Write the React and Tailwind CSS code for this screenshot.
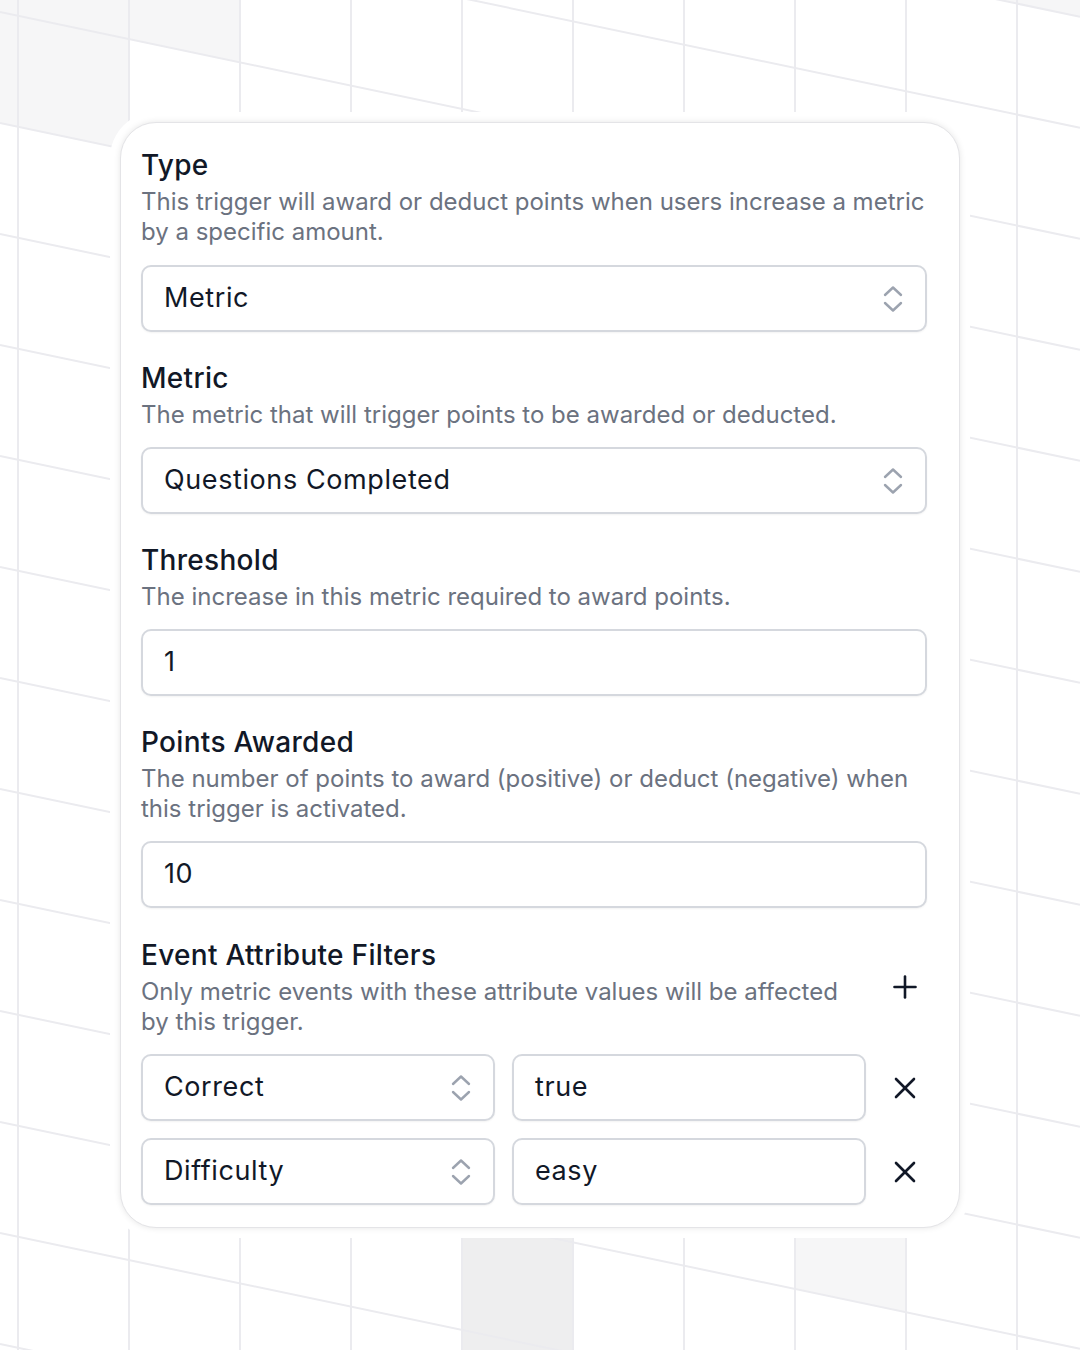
import React from "react";

const FONT = { fontFamily: "Inter, 'Open Sans', sans-serif" };

function Background() {
  const verticals = [18, 129, 240, 351, 462, 573, 684, 795, 906, 1017];
  const lines = [];
  for (let k = -3; k <= 12; k++) {
    const c = 12 + 111 * k;
    lines.push(c);
  }
  return (
    <svg className="absolute inset-0" width="1080" height="1350" viewBox="0 0 1080 1350">
      <polygon points="0,0 129,0 129,150 0,123" fill="#f6f6f7" />
      <polygon points="129,0 240,0 240,62 129,39" fill="#f6f6f7" />
      <polygon points="462,1200 573,1200 573,1350 462,1350" fill="#eeeeef" />
      <polygon points="795,1200 906,1200 906,1312 795,1289" fill="#f6f6f7" />
      <polygon points="1000,0 1080,0 1080,17" fill="#f6f6f7" />
      {verticals.map((x) => (
        <line key={"v" + x} x1={x} y1="0" x2={x} y2="1350" stroke="#ebebef" strokeWidth="2" />
      ))}
      {lines.map((c) => (
        <line key={"h" + c} x1="0" y1={c} x2="1080" y2={c + 0.21 * 1080} stroke="#ebebef" strokeWidth="2" />
      ))}
    </svg>
  );
}

function UpDown() {
  return (
    <svg width="20" height="30" viewBox="0 0 20 30" fill="none" stroke="#9ca3af" strokeWidth="2.4" strokeLinecap="round" strokeLinejoin="round">
      <path d="M2 11 L10 3.5 L18 11" />
      <path d="M2 19 L10 26.5 L18 19" />
    </svg>
  );
}

function XIcon() {
  return (
    <svg width="24" height="24" viewBox="0 0 24 24" fill="none" stroke="#111827" strokeWidth="2.6" strokeLinecap="round">
      <path d="M3 3 L21 21" />
      <path d="M21 3 L3 21" />
    </svg>
  );
}

function PlusIcon() {
  return (
    <svg width="24" height="24" viewBox="0 0 24 24" fill="none" stroke="#111827" strokeWidth="2.6" strokeLinecap="round">
      <path d="M12 1.5 V22.5" />
      <path d="M1.5 12 H22.5" />
    </svg>
  );
}

function Select({ value }) {
  return (
    <div className="flex h-[67px] items-center justify-between rounded-[10px] border-2 border-[#d5d8de] bg-white pl-[21px] pr-[22px] shadow-[0_1px_2px_rgba(0,0,0,0.05)]">
      <span className="text-[27px] text-[#111827] tracking-[0.6px]">{value}</span>
      <UpDown />
    </div>
  );
}

function Input({ value }) {
  return (
    <div className="flex h-[67px] items-center rounded-[10px] border-2 border-[#d5d8de] bg-white pl-[21px] shadow-[0_1px_2px_rgba(0,0,0,0.05)]">
      <span className="text-[27px] text-[#111827] tracking-[0.6px]">{value}</span>
    </div>
  );
}

function Heading({ title, desc }) {
  return (
    <div>
      <div className="text-[28px] font-medium leading-[36px] text-[#111827] tracking-[0.3px]">{title}</div>
      <div className="mt-[4px] text-[24px] leading-[30px] text-[#6b7280] tracking-[0px]">{desc}</div>
    </div>
  );
}

export default function App() {
  return (
    <div className="relative h-[1350px] w-[1080px] overflow-hidden bg-white" style={FONT}>
      <Background />
      <div className="relative pl-[110px] pt-[112px]">
        <div className="w-[860px] rounded-[46px] bg-white p-[10px]">
          <div className="flex flex-col rounded-[36px] border border-[#e4e4e7] bg-white pb-[22px] pl-[20px] pr-[32px] pt-[24px] shadow-[0_0_6px_rgba(0,0,0,0.10)]">
            <Heading
              title="Type"
              desc="This trigger will award or deduct points when users increase a metric by a specific amount."
            />
            <div className="mt-[18px]">
              <Select value="Metric" />
            </div>

            <div className="mt-[28px]">
              <Heading title="Metric" desc="The metric that will trigger points to be awarded or deducted." />
            </div>
            <div className="mt-[17px]">
              <Select value="Questions Completed" />
            </div>

            <div className="mt-[28px]">
              <Heading title="Threshold" desc="The increase in this metric required to award points." />
            </div>
            <div className="mt-[17px]">
              <Input value="1" />
            </div>

            <div className="mt-[28px]">
              <Heading
                title="Points Awarded"
                desc="The number of points to award (positive) or deduct (negative) when this trigger is activated."
              />
            </div>
            <div className="mt-[17px]">
              <Input value="10" />
            </div>

            <div className="mt-[29px] flex items-center gap-[17px]">
              <div className="flex-1">
                <Heading
                  title="Event Attribute Filters"
                  desc="Only metric events with these attribute values will be affected by this trigger."
                />
              </div>
              <div className="flex w-[44px] justify-center">
                <PlusIcon />
              </div>
            </div>

            <div className="mt-[17px] flex flex-col gap-[17px]">
              {[
                ["Correct", "true"],
                ["Difficulty", "easy"],
              ].map(([a, b]) => (
                <div key={a} className="grid grid-cols-[1fr_1fr_44px] items-center gap-[17px]">
                  <Select value={a} />
                  <Input value={b} />
                  <div className="flex justify-center">
                    <XIcon />
                  </div>
                </div>
              ))}
            </div>
          </div>
        </div>
      </div>
    </div>
  );
}
